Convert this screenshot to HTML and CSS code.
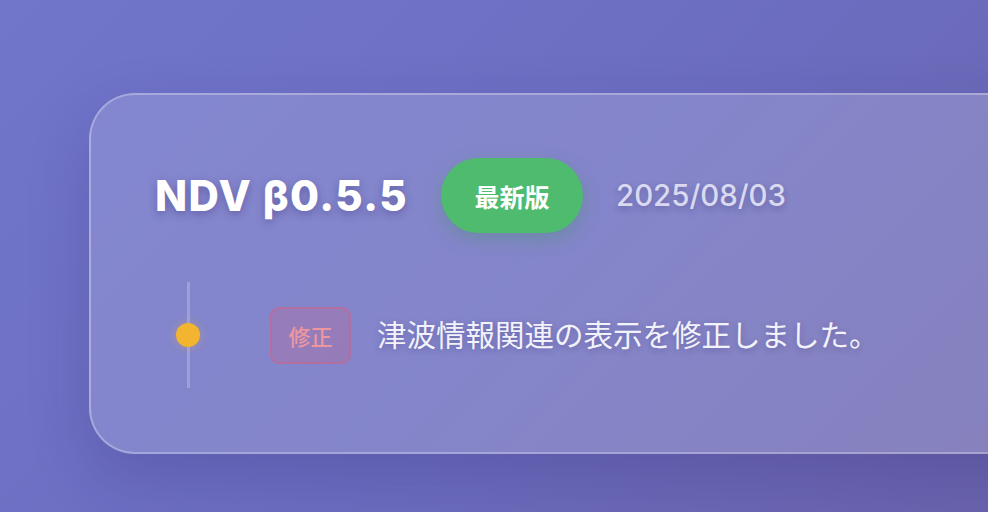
FILE: index.html
```html
<!DOCTYPE html>
<html lang="ja">
<head>
  <meta charset="UTF-8">
  <meta name="viewport" content="width=device-width, initial-scale=1.0">
  <title>NDV 更新履歴</title>
  <link rel="stylesheet" href="styles.css">
</head>
<body>
  <div class="page">
    <!-- Release card -->
    <div class="release-card">
      <div class="release-header">
        <h2 class="version">NDV β0.5.5</h2>
        <span class="badge-latest">最新版</span>
        <span class="release-date">2025/08/03</span>
      </div>

      <div class="timeline">
        <div class="timeline-item">
          <span class="dot"></span>
          <span class="tag tag-fix">修正</span>
          <p class="change-text">津波情報関連の表示を修正しました。</p>
        </div>
      </div>
    </div>
  </div>
</body>
</html>
```

FILE: styles.css
```css
html, body {
  margin: 0;
  padding: 0;
  height: 100%;
  overflow: hidden;
}

body {
  font-family: Inter, "Noto Sans CJK JP", sans-serif;
  background: linear-gradient(135deg, #7176cb 0%, #6c6dc0 55%, #6a63ad 100%);
}

.page {
  padding: 93px 0 0 89px;
}

.release-card {
  box-sizing: border-box;
  width: 1000px;
  height: 361px;
  padding: 63px 0 0 64px;
  background: linear-gradient(135deg, rgba(255, 255, 255, 0.14), rgba(255, 255, 255, 0.2));
  border: 2px solid rgba(255, 255, 255, 0.28);
  border-radius: 46px;
  box-shadow: 0 24px 60px rgba(40, 30, 110, 0.22);
}

.release-header {
  display: flex;
  align-items: center;
  height: 75px;
}

.version {
  margin: 0;
  font-size: 42px;
  font-weight: 800;
  color: #fff;
  letter-spacing: 1.4px;
  text-shadow: 0 3px 8px rgba(40, 30, 100, 0.35);
}

.badge-latest {
  display: flex;
  align-items: center;
  justify-content: center;
  width: 142px;
  height: 75px;
  margin-left: 33px;
  border-radius: 38px;
  background: #4fbb6e;
  color: #fff;
  font-size: 25px;
  font-weight: 700;
  box-shadow: 0 6px 18px rgba(60, 150, 90, 0.35);
}

.release-date {
  margin-left: 33px;
  font-size: 29.4px;
  font-weight: 500;
  color: #d9d9f0;
  text-shadow: 0 3px 6px rgba(40, 30, 100, 0.3);
}

.timeline {
  margin: 49px 0 0 32px;
  border-left: 3px solid rgba(255, 255, 255, 0.22);
  height: 106px;
  display: flex;
  align-items: center;
}

.timeline-item {
  display: flex;
  align-items: center;
}

.dot {
  width: 24px;
  height: 24px;
  margin-left: -14px;
  border-radius: 50%;
  background: #f3b430;
  box-shadow: 0 0 10px rgba(243, 180, 48, 0.35);
}

.tag {
  box-sizing: border-box;
  display: flex;
  align-items: center;
  justify-content: center;
  width: 81px;
  height: 57px;
  margin-left: 70px;
  border-radius: 9px;
  font-size: 22px;
  font-weight: 500;
}

.tag-fix {
  background: rgba(215, 90, 125, 0.22);
  border: 2px solid rgba(225, 90, 120, 0.38);
  color: #ec96a0;
}

.change-text {
  margin: 0 0 5px 26px;
  font-size: 29.5px;
  color: #f2f2fb;
  text-shadow: 0 2px 6px rgba(40, 30, 100, 0.3);
}
```
